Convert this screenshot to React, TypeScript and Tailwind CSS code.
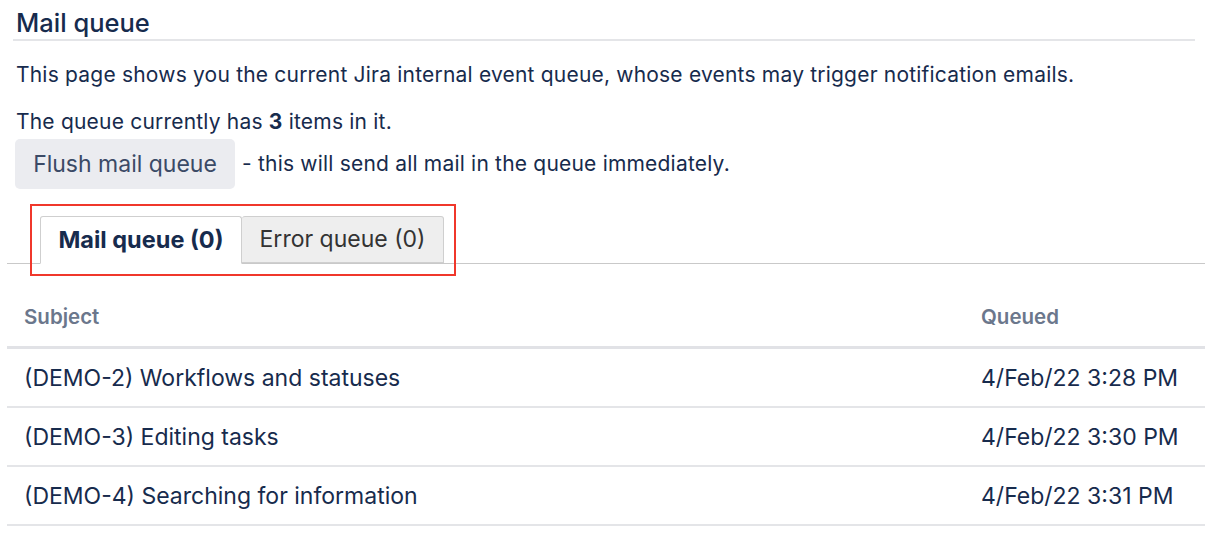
import React from "react";

const rows = [
  { subject: "(DEMO-2) Workflows and statuses", queued: "4/Feb/22 3:28 PM" },
  { subject: "(DEMO-3) Editing tasks", queued: "4/Feb/22 3:30 PM" },
  { subject: "(DEMO-4) Searching for information", queued: "4/Feb/22 3:31 PM" },
];

export default function App() {
  return (
    <div
      className="w-[1212px] h-[541px] bg-white text-[#172b4d] overflow-hidden"
      style={{ fontFamily: "Inter, 'Liberation Sans', sans-serif" }}
    >
      <div className="pl-[16px] pr-[17px] pt-[7px]">
        <h1 className="text-[25.5px] leading-[31px] font-medium pb-[1px] border-b-2 border-[#e4e5e8] -ml-[3px] pl-[3px]">
          Mail queue
        </h1>
        <p className="text-[21px] tracking-[0.2px] leading-[24px] mt-[22px]">
          This page shows you the current Jira internal event queue, whose events may trigger notification emails.
        </p>
        <p className="text-[21px] tracking-[0.2px] leading-[24px] mt-[23px]">
          The queue currently has <b className="font-bold">3</b> items in it.
        </p>
        <div className="flex items-center mt-[5px]">
          <button className="-ml-[1px] h-[50px] w-[220px] rounded-[5px] bg-[#ebecf0] text-[23px] text-[#3b4a66]">
            Flush mail queue
          </button>
          <span className="text-[21px] tracking-[0.2px] ml-[7px]">- this will send all mail in the queue immediately.</span>
        </div>
      </div>

      <div className="relative mt-[27px] ml-[7px] mr-[7px] border-b border-[#c9c9c9] flex pl-[33px]">
        <div className="h-[48px] w-[202px] -mb-px bg-white border border-b-white border-[#cfcfcf] rounded-t-[3px] flex items-center justify-center text-[23.5px] font-bold text-[#172b4d]">
          Mail queue (0)
        </div>
        <div className="h-[47px] w-[202px] bg-[#eeeeee] border border-l-0 border-[#cfcfcf] rounded-t-[3px] flex items-center justify-center text-[23px] text-[#333333]">
          Error queue (0)
        </div>
        <div className="absolute left-[23px] top-[-12px] w-[426px] h-[72px] border-2 border-[#f0372b] pointer-events-none" />
      </div>

      <table className="mt-[41px] ml-[7px] w-[1198px] border-collapse">
        <thead>
          <tr className="border-b-[3px] border-[#e1e2e6]">
            <th className="text-left text-[20.5px] font-semibold text-[#6b778c] pl-[17px] pb-[17px] pt-0 leading-[24px]">
              Subject
            </th>
            <th className="text-left text-[20.5px] font-semibold text-[#6b778c] w-[224px] pb-[17px] leading-[24px]">
              Queued
            </th>
          </tr>
        </thead>
        <tbody>
          {rows.map((r) => (
            <tr key={r.subject} className="border-b-2 border-[#e4e5e8]">
              <td className="text-[23px] pl-[17px] h-[59px] pt-[2px] leading-[26px]">{r.subject}</td>
              <td className="text-[23px] h-[59px] pt-[2px] leading-[26px]">{r.queued}</td>
            </tr>
          ))}
        </tbody>
      </table>
    </div>
  );
}
